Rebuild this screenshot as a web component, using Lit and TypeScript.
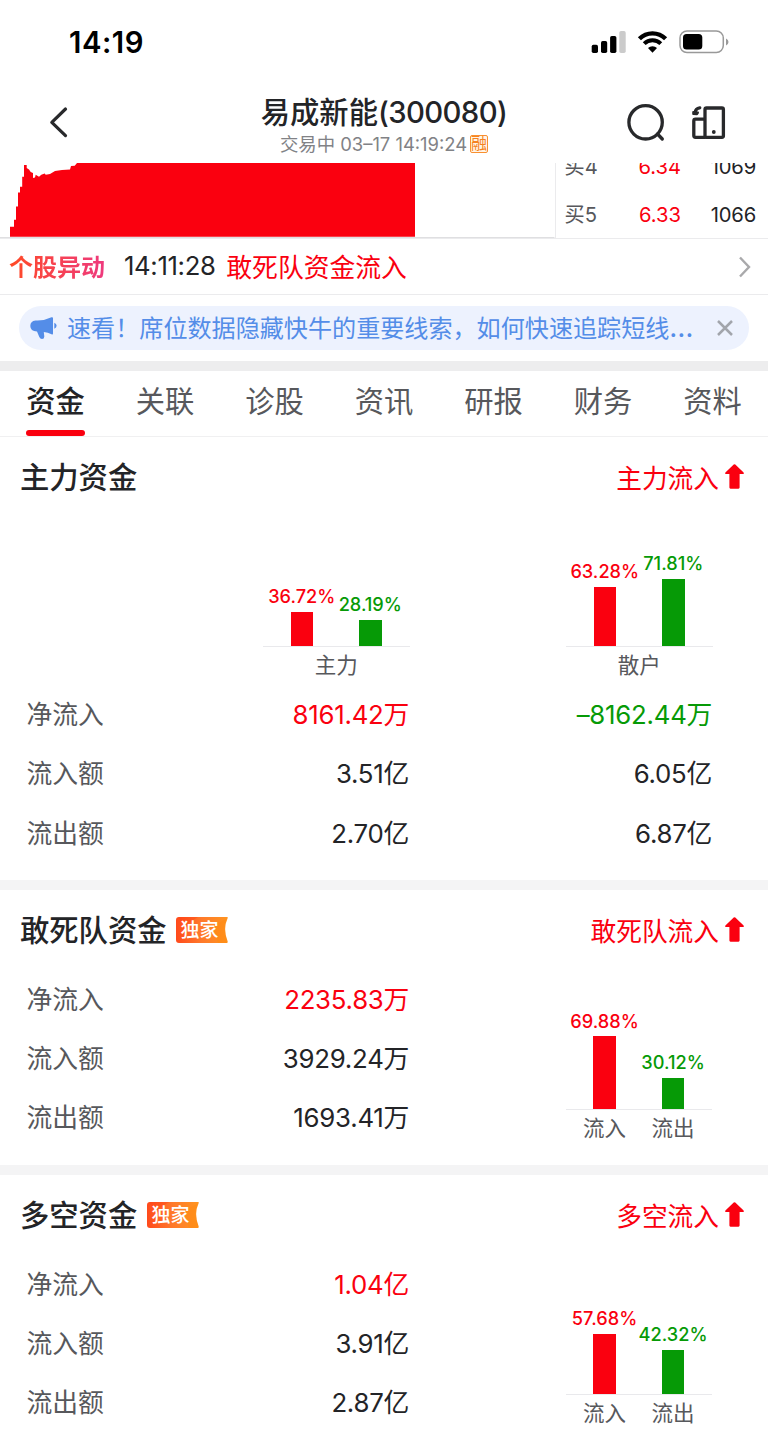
import { LitElement, html, css, nothing } from "lit";
import { customElement, property } from "lit/decorators.js";

type Tone = "up" | "down" | "plain";
interface Bar { pct: string; height: number; tone: Tone; label?: string }
interface Row { name: string; values: { text: string; tone: Tone }[] }

@customElement("bar-pair")
class BarPair extends LitElement {
  @property({ attribute: false }) bars: Bar[] = [];
  @property() caption = "";

  static styles = css`
    :host { display: block; width: 146.5px; }
    .plot { height: 110px; display: flex; align-items: flex-end; padding-left: 4.5px; border-bottom: 1px solid #e9e9ec; }
    .col { width: 68.5px; display: flex; flex-direction: column; align-items: center; }
    .pct { font-size: 18.2px; line-height: 22px; font-weight: 500; margin-bottom: 4.5px; white-space: nowrap; }
    .bar { width: 22.5px; }
    .up .pct { color: #fa000f; }
    .up .bar { background: #fa000f; }
    .down .pct { color: #069a06; }
    .down .bar { background: #069a06; }
    .names { display: flex; justify-content: center; height: 37px; line-height: 37px; font-size: 21.5px; color: #57585c; }
    .names.split { justify-content: flex-start; padding-left: 4.5px; }
    .name { width: 68.5px; text-align: center; }
  `;

  render() {
    return html`
      <div class="plot">
        ${this.bars.map((b) => html`
          <div class="col ${b.tone}">
            <span class="pct">${b.pct}</span>
            <div class="bar" style="height:${b.height}px"></div>
          </div>`)}
      </div>
      ${this.caption
        ? html`<div class="names">${this.caption}</div>`
        : html`<div class="names split">${this.bars.map((b) => html`<span class="name">${b.label}</span>`)}</div>`}
    `;
  }
}

@customElement("fund-section")
class FundSection extends LitElement {
  @property() heading = "";
  @property() flow = "";
  @property({ type: Boolean }) exclusive = false;
  @property({ attribute: false }) rows: Row[] = [];
  @property({ attribute: false }) side: Bar[] = [];
  @property({ attribute: false }) top: { caption: string; bars: Bar[] }[] = [];

  static styles = css`
    :host { display: block; background: #fff; }
    .head { height: 80px; display: flex; align-items: center; padding: 0 24px 0 20px; box-sizing: border-box; }
    .title { font-size: 29.3px; font-weight: 500; color: #232427; padding-bottom: 3px; }
    .badge { margin-left: 10px; width: 52px; height: 26px; }
    .badge text { font-size: 19px; font-weight: 500; fill: #fff; }
    .flow { margin-left: auto; font-size: 25.7px; color: #fa000f; padding-bottom: 1px; }
    .arrow { margin-left: 6px; width: 19px; height: 25px; }
    .charts { display: flex; gap: 156.5px; padding: 19.5px 0 0 263px; height: 168.3px; box-sizing: border-box; }
    .body { display: flex; }
    .table { flex: none; }
    .row { display: flex; height: 59.4px; line-height: 59.4px; font-size: 25.8px; }
    .name { width: 200px; padding-left: 26.5px; color: #57585c; }
    .value { width: 182.6px; text-align: right; color: #232427; white-space: nowrap; letter-spacing: -.25px; }
    .value + .value { width: 303px; }
    .value.up { color: #fa000f; }
    .value.down { color: #069a06; }
    .side { margin-left: 156.7px; padding-top: 29.5px; }
  `;

  render() {
    return html`
      <div class="head">
        <span class="title">${this.heading}</span>
        ${this.exclusive ? html`
          <svg class="badge" viewBox="0 0 52 26">
            <defs>
              <linearGradient id="g" x1="0" y1="0" x2="1" y2="0">
                <stop offset="0" stop-color="#ff4a1c"></stop>
                <stop offset="0.5" stop-color="#ff7a2b"></stop>
                <stop offset="1" stop-color="#ff951f"></stop>
              </linearGradient>
            </defs>
            <path d="M3 0H51.2Q52 0 51.7 1Q46.500 12 51.7 24.6Q52 26 51 26H3Q0 26 0 23V3Q0 0 3 0Z" fill="url(#g)"></path>
            <path d="M2 0H22L8 9Z" fill="#ff3c12" opacity=".35"></path>
            <path d="M36 9L50 2L48.500 12L51 26H42Z" fill="#ff8a10" opacity=".45"></path>
            <text x="4.500" y="20.300">独家</text>
          </svg>` : nothing}
        <span class="flow">${this.flow}</span>
        <svg class="arrow" viewBox="0 0 19 25">
          <path d="M8.700 .6Q9.500 -.1 10.300 .6L18.600 8.600Q19.200 10 18 10H14.600V23.600Q14.600 24.700 13.500 24.700H5.500Q4.400 24.700 4.400 23.600V10H1Q-.2 10 .4 8.600Z" fill="#fa000f"></path>
        </svg>
      </div>
      ${this.top.length ? html`<div class="charts">
        ${this.top.map((c) => html`<bar-pair .bars=${c.bars} .caption=${c.caption}></bar-pair>`)}
      </div>` : nothing}
      <div class="body">
        <div class="table">
          ${this.rows.map((r) => html`<div class="row">
            <span class="name">${r.name}</span>
            ${r.values.map((v) => html`<span class="value ${v.tone}">${v.text}</span>`)}
          </div>`)}
        </div>
        ${this.side.length ? html`<div class="side"><bar-pair .bars=${this.side}></bar-pair></div>` : nothing}
      </div>
    `;
  }
}

const pair = (a: string, b: string, scale: number): Bar[] => [
  { pct: a + "%", height: parseFloat(a) * scale, tone: "up", label: "流入" },
  { pct: b + "%", height: parseFloat(b) * scale, tone: "down", label: "流出" },
];

@customElement("app-root")
class AppRoot extends LitElement {
  static styles = css`
    :host { display: block; width: 768px; height: 1443px; overflow: hidden; background: #fff; color: #232427; font-family: Inter, "Noto Sans CJK SC", sans-serif; }
    .status { height: 84px; display: flex; justify-content: space-between; }
    .time { padding-left: 69px; line-height: 85px; font-size: 29.3px; font-weight: 600; color: #000; letter-spacing: .5px; }
    .indicators { width: 148px; height: 60px; margin-right: 30px; }
    .nav { height: 79px; display: grid; grid-template-columns: 160px 1fr 160px; }
    .back { width: 80px; height: 79px; }
    .tools { width: 160px; height: 79px; }
    .names { display: flex; flex-direction: column; align-items: center; padding-top: 9px; }
    .stock { height: 39px; line-height: 39px; font-size: 29.3px; font-weight: 500; white-space: nowrap; }
    .code { letter-spacing: -.6px; }
    .sub { height: 24px; line-height: 24px; display: flex; align-items: center; font-size: 18.4px; color: #818286; white-space: nowrap; }
    .tag { margin-left: 3px; width: 16px; height: 16px; border: 1px solid #f99030; border-radius: 2px; background: #fff4e6; color: #f58220; font-size: 16px; line-height: 15px; text-align: center; }
    .quote { height: 75.500px; display: flex; border-bottom: 1px solid #ebebed; overflow: hidden; box-sizing: border-box; }
    .trend { width: 554.5px; height: 75px; flex: none; border-right: 1px solid #ebebed; }
    .book { flex: 1; height: 75px; overflow: hidden; display: flex; flex-direction: column; justify-content: flex-end; }
    .level { display: flex; flex: none; height: 47.5px; line-height: 47.5px; font-size: 20.2px; }
    .side { width: 63.5px; padding-left: 9px; color: #57585c; }
    .price { width: 53px; text-align: right; color: #fa000f; }
    .vol { width: 75px; text-align: right; letter-spacing: -.2px; }
    .alert { height: 56px; display: flex; align-items: center; border-bottom: 1px solid #ebebed; box-sizing: border-box; padding: 0 0 1px 9px; white-space: nowrap; }
    .kind { font-size: 24px; font-weight: 700; background: linear-gradient(90deg, #ff4a25, #ee3a7e); -webkit-background-clip: text; background-clip: text; color: transparent; padding-bottom: 1px; }
    .at { margin-left: 19px; font-size: 25.700px; width: 102.3px; letter-spacing: -.35px; }
    .what { font-size: 25.8px; color: #fa000f; }
    .more { margin-left: auto; margin-right: 17px; margin-top: 2px; width: 14px; height: 24px; }
    .notice { padding: 11px 19px; height: 66.5px; box-sizing: border-box; }
    .pill { height: 44px; border-radius: 22px; background: #edf2fe; color: #548de8; display: flex; align-items: center; padding-left: 11px; }
    .horn { width: 28px; height: 26px; }
    .tip { margin-left: 9px; font-size: 24.1px; line-height: 44px; white-space: nowrap; padding-top: 2px; }
    .dots { font-size: 28px; line-height: 1; }
    .close { margin-left: auto; margin-right: 15px; width: 18px; height: 18px; }
    .gap { height: 9.5px; background: #ededee; }
    .gap.soft { background: #f4f4f5; }
    .tabs { height: 66px; display: flex; padding-left: .7px; border-bottom: 1px solid #f0f0f1; box-sizing: border-box; }
    .tab { width: 109.5px; flex: none; display: flex; flex-direction: column; align-items: center; justify-content: space-between; font-size: 29.3px; color: #57585c; }
    .word { height: 59px; line-height: 62px; }
    .tab.on { color: #232427; font-weight: 500; }
    .mark { width: 59px; height: 6px; border-radius: 3px; background: #fa000f; }
    .main { height: 443.500px; }
    .mid { height: 275.500px; }
  `;

  render() {
    const tabs = ["资金", "关联", "诊股", "资讯", "研报", "财务", "资料"];
    const ink = "#28292b";
    return html`
      <div class="status">
        <span class="time">14:19</span>
        <svg class="indicators" viewBox="590 0 148 60">
          <rect x="591.7" y="44.7" width="6.300" height="8.300" rx="1.700"></rect>
          <rect x="601" y="41" width="6.200" height="12" rx="1.700"></rect>
          <rect x="610.100" y="36" width="6.300" height="17" rx="1.700"></rect>
          <rect x="619.300" y="31" width="6.400" height="22" rx="1.700" fill="#cbcbcb"></rect>
          <g fill="none" stroke="#000">
            <path d="M639.400 38.800A18.600 18.600 0 0 1 665.600 38.800" stroke-width="4.400"></path>
            <path d="M644.200 43.600A11.800 11.800 0 0 1 660.800 43.600" stroke-width="4"></path>
          </g>
          <path d="M648 48A6.400 6.400 0 0 1 657 48L652.500 52.700Z"></path>
          <rect x="680" y="31" width="43.300" height="21.500" rx="7" fill="none" stroke="#999" stroke-width="1.500"></rect>
          <rect x="683" y="34" width="19.300" height="15.600" rx="3.600"></rect>
          <path d="M726 38.500Q728.500 39.800 728.500 42T726 45.500Z" fill="#999"></path>
        </svg>
      </div>
      <div class="nav">
        <svg class="back" viewBox="0 84 80 79">
          <path d="M65.500 109L51.800 122.300L65.500 135.600" fill="none" stroke=${ink} stroke-width="3.200" stroke-linecap="round" stroke-linejoin="round"></path>
        </svg>
        <div class="names">
          <div class="stock">易成新能<span class="code">(300080)</span></div>
          <div class="sub"><span>交易中 03–17 14:19:24</span><span class="tag">融</span></div>
        </div>
        <svg class="tools" viewBox="608 84 160 79" fill="none" stroke=${ink} stroke-width="3.300" stroke-linecap="round" stroke-linejoin="round">
          <circle cx="645.600" cy="122.300" r="16.700"></circle>
          <path d="M657.500 134L662.300 139"></path>
          <rect x="705" y="108" width="18.400" height="29.300" rx="1.500"></rect>
          <path d="M703.500 119.200H695.500Q693.800 119.200 693.800 121V135.500Q693.800 137.300 695.500 137.300H705"></path>
          <path d="M699.800 107.800Q695.400 108.300 695.200 112.500" stroke-width="3.200"></path>
          <path d="M693.200 112L698 112.600L697 114.200L693.200 114Z" stroke-width="2" fill=${ink}></path>
          <circle cx="713.800" cy="132" r="1.900" fill=${ink} stroke="none"></circle>
        </svg>
      </div>
      <div class="quote">
        <svg class="trend" viewBox="0 163.300 554.500 75">
          <path fill="#fa000f" d="M10 227H14V220H16V206.700H18V192.700H20V187H22.200V177H24V165.300H26.700V168.300L29 169.700L30.700 172.300L33 173.300V178.300L35 177.700L35.700 175L39 177L41.300 175L44.700 173.700L45.700 175L50 174.300L55 171.300L62 170.300L70 169.700L71 166.300L74.700 166L77 163.300H415V237H10Z"></path>
          <path d="M0 237.900H554.500" stroke="#dcdcde"></path>
        </svg>
        <div class="book">
          <div class="level"><span class="side">买4</span><span class="price">6.34</span><span class="vol">1069</span></div>
          <div class="level"><span class="side">买5</span><span class="price">6.33</span><span class="vol">1066</span></div>
        </div>
      </div>
      <div class="alert">
        <span class="kind">个股异动</span><span class="at">14:11:28</span><span class="what">敢死队资金流入</span>
        <svg class="more" viewBox="0 0 14 24"><path d="M3 2.500L12 12L3 21.500" fill="none" stroke="#a9a9ab" stroke-width="2.400"></path></svg>
      </div>
      <div class="notice">
        <div class="pill">
          <svg class="horn" viewBox="0 0 28 26" fill="#548de8">
            <path d="M5.500 5.500Q14 6 21.500 2.300Q23 1.800 23 3.300V18.500Q23 20 21.500 19.200Q18 17.300 13.800 17L14.300 21.500Q14.300 24 12 24Q10.200 24 9.300 22L7 16.500Q.3 16 .3 11Q.3 6 5.500 5.500Z"></path>
            <path d="M24.300 7.800Q26.600 8.600 26.600 10.800T24.300 13.800Z"></path>
          </svg>
          <span class="tip">速看！席位数据隐藏快牛的重要线索，如何快速追踪短线<span class="dots">…</span></span>
          <svg class="close" viewBox="0 0 18 18"><path d="M2 2L16 16M16 2L2 16" stroke="#a2a5ac" stroke-width="2.500"></path></svg>
        </div>
      </div>
      <div class="gap"></div>
      <div class="tabs">
        ${tabs.map((t, i) => html`<div class="tab ${i === 0 ? "on" : ""}"><span class="word">${t}</span>${i === 0 ? html`<i class="mark"></i>` : nothing}</div>`)}
      </div>
      <fund-section class="main" heading="主力资金" flow="主力流入"
        .top=${[{ caption: "主力", bars: pair("36.72", "28.19", 0.934) }, { caption: "散户", bars: pair("63.28", "71.81", 0.934) }]}
        .rows=${[
          { name: "净流入", values: [{ text: "8161.42万", tone: "up" }, { text: "–8162.44万", tone: "down" }] },
          { name: "流入额", values: [{ text: "3.51亿", tone: "plain" }, { text: "6.05亿", tone: "plain" }] },
          { name: "流出额", values: [{ text: "2.70亿", tone: "plain" }, { text: "6.87亿", tone: "plain" }] },
        ]}></fund-section>
      <div class="gap soft"></div>
      <fund-section class="mid" heading="敢死队资金" flow="敢死队流入" exclusive
        .side=${pair("69.88", "30.12", 1.04)}
        .rows=${[
          { name: "净流入", values: [{ text: "2235.83万", tone: "up" }] },
          { name: "流入额", values: [{ text: "3929.24万", tone: "plain" }] },
          { name: "流出额", values: [{ text: "1693.41万", tone: "plain" }] },
        ]}></fund-section>
      <div class="gap soft"></div>
      <fund-section heading="多空资金" flow="多空流入" exclusive
        .side=${pair("57.68", "42.32", 1.045)}
        .rows=${[
          { name: "净流入", values: [{ text: "1.04亿", tone: "up" }] },
          { name: "流入额", values: [{ text: "3.91亿", tone: "plain" }] },
          { name: "流出额", values: [{ text: "2.87亿", tone: "plain" }] },
        ]}></fund-section>
    `;
  }
}
